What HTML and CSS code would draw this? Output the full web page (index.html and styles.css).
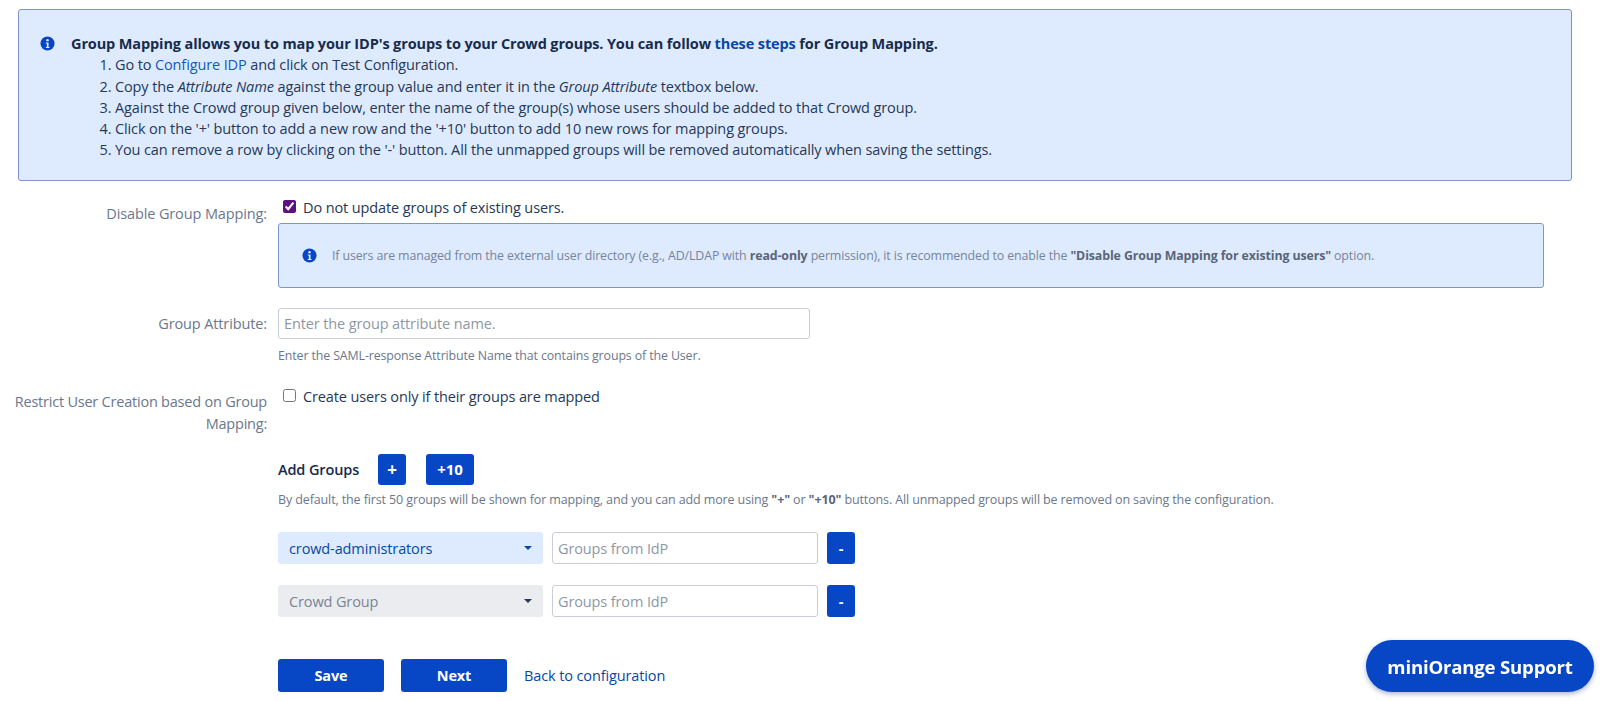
FILE: index.html
```html
<!DOCTYPE html>
<html lang="en">
<head>
<meta charset="utf-8">
<title>Group Mapping</title>
<link rel="stylesheet" href="styles.css">
</head>
<body>
<main class="page">
  <section class="banner">
    <svg class="info info-main" viewBox="0 0 16 16"><circle cx="8" cy="8" r="7.5" fill="#0747c6"/><circle cx="8" cy="4.4" r="1.3" fill="#dfeafd"/><path d="M6.2 6.8h2.9v4.9h1v1.2H6.2v-1.2h1.1V8H6.2z" fill="#dfeafd"/></svg>
    <div class="banner-body">
      <p class="banner-title">Group Mapping allows you to map your IDP's groups to your Crowd groups. You can follow <a href="#">these steps</a> for Group Mapping.</p>
      <ol class="steps">
        <li>Go to <a class="plain" href="#">Configure IDP</a> and click on Test Configuration.</li>
        <li>Copy the <em>Attribute Name</em> against the group value and enter it in the <em>Group Attribute</em> textbox below.</li>
        <li>Against the Crowd group given below, enter the name of the group(s) whose users should be added to that Crowd group.</li>
        <li>Click on the '+' button to add a new row and the '+10' button to add 10 new rows for mapping groups.</li>
        <li>You can remove a row by clicking on the '-' button. All the unmapped groups will be removed automatically when saving the settings.</li>
      </ol>
    </div>
  </section>

  <div class="field field-disable">
    <div class="label">Disable Group Mapping:</div>
    <div class="control">
      <label class="check"><input type="checkbox" class="box" checked> Do not update groups of existing users.</label>
      <div class="note">
        <svg class="info info-note" viewBox="0 0 16 16"><circle cx="8" cy="8" r="7.5" fill="#0747c6"/><circle cx="8" cy="4.4" r="1.3" fill="#dfeafd"/><path d="M6.2 6.8h2.9v4.9h1v1.2H6.2v-1.2h1.1V8H6.2z" fill="#dfeafd"/></svg>
        <p>If users are managed from the external user directory (e.g., AD/LDAP with <b>read-only</b> permission), it is recommended to enable the <b>"Disable Group Mapping for existing users"</b> option.</p>
      </div>
    </div>
  </div>

  <div class="field field-attr">
    <div class="label label-input">Group Attribute:</div>
    <div class="control">
      <input class="text text-wide" type="text" placeholder="Enter the group attribute name.">
      <p class="help help-attr">Enter the SAML-response Attribute Name that contains groups of the User.</p>
    </div>
  </div>

  <div class="field field-restrict">
    <div class="label label-two">Restrict User Creation based on Group Mapping:</div>
    <div class="control">
      <label class="check"><input type="checkbox" class="box"> Create users only if their groups are mapped</label>
    </div>
  </div>

  <div class="groups">
    <div class="add-row">
      <strong class="add-title">Add Groups</strong>
      <button class="btn btn-plus">+</button>
      <button class="btn btn-ten">+10</button>
    </div>
    <p class="help help-add">By default, the first 50 groups will be shown for mapping, and you can add more using <b>"+"</b> or <b>"+10"</b> buttons. All unmapped groups will be removed on saving the configuration.</p>
    <div class="map-row">
      <div class="select select-selected"><span>crowd-administrators</span><i class="caret"></i></div>
      <input class="text text-map" type="text" placeholder="Groups from IdP">
      <button class="btn btn-minus">-</button>
    </div>
    <div class="map-row">
      <div class="select"><span>Crowd Group</span><i class="caret"></i></div>
      <input class="text text-map" type="text" placeholder="Groups from IdP">
      <button class="btn btn-minus">-</button>
    </div>
    <div class="actions">
      <button class="btn btn-action">Save</button>
      <button class="btn btn-action">Next</button>
      <a class="plain back" href="#">Back to configuration</a>
    </div>
  </div>
</main>
<button class="support">miniOrange Support</button>
</body>
</html>
```
FILE: styles.css
```css
* { box-sizing: border-box; }
html, body { margin: 0; height: 701px; overflow: hidden; background: #fff; }
body {
  font-family: "Open Sans", "Noto Sans", sans-serif;
  font-size: 14.5px;
  line-height: 21.3px;
  color: #3f4a60;
  letter-spacing: -0.12px;
}
p { margin: 0; }
a { color: #0747a6; text-decoration: none; }
.page { padding: 9px 0 0 0; }
.banner {
  width: 1554px;
  height: 172px;
  margin-left: 18px;
  background: #deebff;
  border: 1px solid #7f95c9;
  border-radius: 3px;
  padding: 23px 20px 0 21px;
  display: flex;
}
.info { flex: none; display: block; }
.info-main { width: 15px; height: 15px; margin: 3px 16px 0 0; }
.banner-title { font-weight: 700; color: #172b4d; }
.banner-title a { color: #0747a6; }
.steps { margin: 0; padding: 0 0 0 44px; color: #253858; }
.plain { color: #1257bd; }
.field { display: flex; }
.label {
  width: 267px;
  flex: none;
  text-align: right;
  color: #6b778c;
}
.control { margin-left: 11px; }
.field-disable { margin-top: 15px; }
.field-disable .label { padding-top: 7px; }
.check { display: flex; align-items: center; color: #253858; height: 21px; padding-left: 5px; margin-top: 1px; }
.box {
  width: 13px; height: 13px; margin: 0 7px 2px 0;
  accent-color: #5e1080;
}
.note {
  width: 1266px;
  height: 65px;
  margin-top: 5px;
  background: #deebff;
  border: 1px solid #7f95c9;
  border-radius: 3px;
  display: flex;
  align-items: center;
  padding-left: 23px;
  font-size: 12.4px;
  color: #77839a;
}
.note b { color: #5a6579; }
.info-note { width: 15px; height: 15px; margin-right: 15px; }
.field-attr { margin-top: 20px; }
.label-input { padding-top: 5px; }
.text {
  display: block;
  font: inherit;
  letter-spacing: inherit;
  height: 31px;
  padding: 0 5px;
  background: #fff;
  border: 1px solid #c9ced6;
  border-radius: 3px;
  color: #253858;
  outline: none;
}
.text::placeholder { color: #8f97a5; opacity: 1; }
.text-wide { width: 532px; }
.help { font-size: 12.4px; color: #6b778c; }
.help b { color: #5a6579; }
.help-attr { margin-top: 6px; }
.field-restrict { margin-top: 19px; }
.label-two { padding-top: 6px; letter-spacing: -0.22px; }
.groups { margin: 0 0 0 278px; }
.add-row { display: flex; align-items: center; margin-top: 20px; }
.add-title { font-weight: 600; color: #172b4d; width: 100px; }
.btn {
  font: inherit;
  letter-spacing: inherit;
  border: 0;
  border-radius: 3px;
  background: #0747c6;
  color: #fff;
  font-weight: 700;
  padding: 0;
}
.btn-plus { width: 28px; height: 31px; font-size: 17px; }
.btn-ten { width: 48px; height: 31px; margin-left: 20px; font-size: 15px; }
.help-add { margin-top: 4px; font-size: 12.5px; }
.map-row { display: flex; margin-top: 21px; }
.help-add + .map-row { margin-top: 22px; }
.select {
  width: 265px;
  height: 32px;
  background: #ebecf0;
  border-radius: 3px;
  display: flex;
  align-items: center;
  justify-content: space-between;
  padding: 0 11px;
  color: #7a8394;
}
.select-selected { background: #deebff; color: #0747a6; }
.caret {
  width: 0; height: 0;
  border-left: 4px solid transparent;
  border-right: 4px solid transparent;
  border-top: 4px solid #253858;
}
.select-selected .caret { border-top-color: #0747a6; }
.text-map { width: 266px; height: 32px; margin-left: 9px; }
.btn-minus { width: 28px; height: 32px; margin-left: 9px; }
.actions { display: flex; align-items: center; margin-top: 42px; }
.btn-action { width: 106px; height: 33px; margin-right: 17px; }
.back { color: #0747a6; }
.support {
  position: fixed;
  left: 1366px;
  top: 640px;
  width: 228px;
  height: 52px;
  border: 0;
  border-radius: 26px;
  background: #0747c6;
  color: #fff;
  font: 700 18.6px "Open Sans", sans-serif;
  letter-spacing: -0.2px;
  box-shadow: 0 2px 5px rgba(7,40,120,.35);
}
```
